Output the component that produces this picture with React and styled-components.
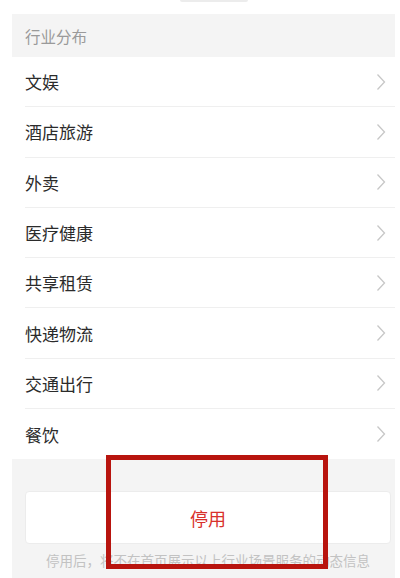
import React from 'react';
import styled, { createGlobalStyle } from 'styled-components';

const GlobalStyle = createGlobalStyle`
    html, body {
        margin: 0;
        padding: 0;
        background: #fff;
        font-family: "Noto Sans CJK SC", "Noto Sans", sans-serif;
    }
`

const industries = ['文娱', '酒店旅游', '外卖', '医疗健康', '共享租赁', '快递物流', '交通出行', '餐饮'];

const Chevron = () => (
    <svg width="10" height="18" viewBox="0 0 10 18">
        <path d="M1.5 1.5 L8.5 9 L1.5 16.5" fill="none" stroke="#c7c7c7" strokeWidth="1.3" />
    </svg>
);

class App extends React.Component {
    render() {
        return (
            <>
                <GlobalStyle />
                <Page>
                    <TopNub />
                    <Screen>
                        <SectionHeader>行业分布</SectionHeader>
                        <List>
                            {industries.map((name, i) => (
                                <Row key={name} last={i === industries.length - 1}>
                                    <RowLabel>{name}</RowLabel>
                                    <Chevron />
                                </Row>
                            ))}
                        </List>
                        <Footer>
                            <StopButton>停用</StopButton>
                            <Hint>停用后，将不在首页展示以上行业场景服务的动态信息</Hint>
                            <Highlight />
                        </Footer>
                    </Screen>
                </Page>
            </>
        );
    }
}

const Page = styled.div`
    width: 400px;
    height: 578px;
    overflow: hidden;
    position: relative;
    padding-top: 14px;
    box-sizing: border-box;
`
const TopNub = styled.div`
    position: absolute;
    top: 0;
    left: 180px;
    width: 68px;
    height: 2px;
    border-radius: 0 0 3px 3px;
    background: #ececec;
`
const Screen = styled.div`
    margin: 0 5px 0 12px;
    background: #f4f4f4;
    height: 564px;
    display: flex;
    flex-direction: column;
`
const SectionHeader = styled.div`
    height: 43px;
    display: flex;
    align-items: center;
    padding-left: 13px;
    font-size: 15.5px;
    color: #9a9a9a;
`
const List = styled.div`
    background: #fff;
`
const Row = styled.div`
    height: 50.3px;
    margin-left: 13px;
    padding-right: 9px;
    display: flex;
    align-items: center;
    justify-content: space-between;
    box-sizing: border-box;
    border-bottom: ${props => props.last ? 'none' : '1px solid #efefef'};
`
const RowLabel = styled.span`
    font-size: 17px;
    color: #2b2b2b;
`
const Footer = styled.div`
    position: relative;
    flex: 1;
    padding: 32px 4px 0 13px;
    display: flex;
    flex-direction: column;
    align-items: stretch;
`
const StopButton = styled.div`
    height: 53px;
    background: #fff;
    border: 1px solid #ececec;
    border-radius: 4px;
    display: flex;
    align-items: center;
    justify-content: center;
    font-size: 18px;
    color: #d8312b;
    box-sizing: border-box;
`
const Hint = styled.div`
    margin-top: 6px;
    text-align: center;
    font-size: 13.5px;
    color: #c2c2c2;
    white-space: nowrap;
`
const Highlight = styled.div`
    position: absolute;
    left: 94px;
    top: -4px;
    width: 222px;
    height: 114px;
    border: 5.5px solid #b8140e;
    box-sizing: border-box;
`

export default App;
